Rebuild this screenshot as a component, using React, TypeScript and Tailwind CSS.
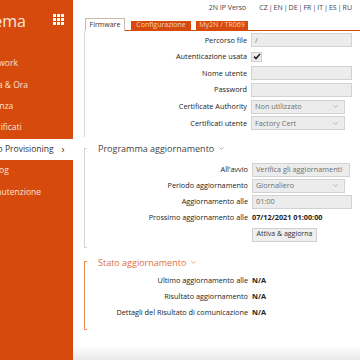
import { ChevronDown } from 'lucide-react';
import type { ReactNode } from 'react';

const ORANGE = 'bg-[#d64a0d]';

const NAV = ['Network', 'Data & Ora', 'Licenza', 'Certificati', 'Auto Provisioning', 'Syslog', 'Manutenzione'];

function GridIcon() {
  return (
    <svg width="11" height="11" viewBox="0 0 11 11" fill="#fff">
      {[0, 4, 8].map((y) =>
        [0, 4, 8].map((x) => <rect key={`${x}-${y}`} x={x} y={y} width="3" height="3" />),
      )}
    </svg>
  );
}

function Sidebar() {
  return (
    <aside className={`w-[73px] shrink-0 overflow-hidden ${ORANGE} text-white`}>
      <div className="flex h-[53px] items-start justify-between pt-[10px] pr-[9px]">
        <span className="ml-[-33px] whitespace-nowrap text-[16px] leading-[22px] text-[#fbe6da]">Sistema</span>
        <span className="mt-[4px]">
          <GridIcon />
        </span>
      </div>
      <nav>
        {NAV.map((item) => {
          const active = item === 'Auto Provisioning';
          return (
            <div
              key={item}
              className={`flex h-[21.4px] items-center whitespace-nowrap text-[8.5px] ${
                active ? 'bg-white text-[#333]' : 'text-[#fbe3d4]'
              }`}
            >
              <span className="ml-[-16px]">{item}</span>
              {active && <span className="ml-[8px] text-[10px] leading-none">›</span>}
            </div>
          );
        })}
      </nav>
    </aside>
  );
}

function Field({ w = 101, value = '', select = false }: { w?: number; value?: string; select?: boolean }) {
  return (
    <div
      className="flex h-[14px] items-center justify-between border border-[#d2d2d2] bg-[#ececec] pl-[3px] pr-[5px] text-[7.3px] text-[#6f6f6f]"
      style={{ width: w }}
    >
      <span className="whitespace-nowrap">{value}</span>
      {select && <ChevronDown size={7} strokeWidth={2} className="text-[#888]" />}
    </div>
  );
}

function Row({ label, labelW, children, h = 'h-[16.6px]' }: { label: string; labelW: number; children?: ReactNode; h?: string }) {
  return (
    <div className={`flex items-center ${h}`}>
      <div className="whitespace-nowrap text-right text-[7.3px] leading-none text-[#222]" style={{ width: labelW }}>
        {label}
      </div>
      <div className="ml-[4px] flex items-center leading-none">{children}</div>
    </div>
  );
}

function Value({ children }: { children: ReactNode }) {
  return <span className="text-[7.3px] font-bold leading-none text-[#222]">{children}</span>;
}

function Bracket({ color, top }: { color: string; top: string }) {
  return <div className={`w-[3px] shrink-0 border-y border-l ${color} ${top}`} />;
}

export default function App() {
  return (
    <div className="flex h-[360px] w-[360px] overflow-hidden bg-white font-['Open_Sans',sans-serif]">
      <Sidebar />
      <main className="flex min-w-0 flex-1 flex-col">
        <div className="flex h-[13px] items-end justify-end gap-[13px] pr-[8px] text-[7px] text-[#444]">
          <span>2N IP Verso</span>
          <span className="[word-spacing:-0.8px]">CZ | EN | DE | FR | IT | ES | RU</span>
        </div>

        {/* tabs */}
        <div className="mt-[5px] flex items-end pl-[12px]">
          <div className="flex h-[13px] w-[40px] items-center justify-center border-x border-t border-[#c9b8aa] text-[7px] text-[#333]">
            Firmware
          </div>
          <div className="flex flex-1 items-end gap-[5px] border-b-[1.5px] border-[#d64a0d] pl-[6px]">
            <div className={`flex h-[9.5px] w-[60px] items-center justify-center ${ORANGE} text-[7px] text-[#fad2be]`}>
              Configurazione
            </div>
            <div className={`flex h-[9.5px] w-[52px] items-center justify-center ${ORANGE} text-[7px] text-[#fad2be]`}>
              My2N / TR069
            </div>
          </div>
        </div>

        {/* firmware panel */}
        <div className="ml-[11px] border-l border-[#d8d8d8] pt-[1px] pb-[5px]">
          <Row label="Percorso file" labelW={162}>
            <Field value="/" />
          </Row>
          <Row label="Autenticazione usata" labelW={162}>
            <div className="flex h-[10px] w-[11px] items-center justify-center border border-[#cfcfcf] bg-[#ececec]">
              <svg width="8" height="7" viewBox="0 0 8 7">
                <path d="M1 3.6 L3 5.6 L7 1" fill="none" stroke="#222" strokeWidth="1.5" />
              </svg>
            </div>
          </Row>
          <Row label="Nome utente" labelW={162}>
            <Field />
          </Row>
          <Row label="Password" labelW={162}>
            <Field />
          </Row>
          <Row label="Certificate Authority" labelW={162}>
            <Field w={94} value="Non utilizzato" select />
          </Row>
          <Row label="Certificati utente" labelW={162}>
            <Field w={94} value="Factory Cert" select />
          </Row>
        </div>

        {/* programma aggiornamento */}
        <div className="mt-[6px] ml-[11px] flex">
          <Bracket color="border-[#d4d4d4]" top="mt-[5px]" />
          <div className="flex-1 pb-[6px]">
            <div className="flex h-[12px] items-center gap-[4px] pl-[11px] text-[9px] text-[#444]">
              Programma aggiornamento
              <ChevronDown size={7} strokeWidth={2} className="text-[#777]" />
            </div>
            <div className="h-[7px]" />
            <Row label="All'avvio" labelW={161} h="h-[16px]">
              <Field w={98} value="Verifica gli aggiornamenti" select />
            </Row>
            <Row label="Periodo aggiornamento" labelW={161} h="h-[16px]">
              <Field w={93} value="Giornaliero" select />
            </Row>
            <Row label="Aggiornamento alle" labelW={161} h="h-[16px]">
              <Field w={100} value="01:00" />
            </Row>
            <Row label="Prossimo aggiornamento alle" labelW={161} h="h-[16px]">
              <Value>07/12/2021 01:00:00</Value>
            </Row>
            <div className="mt-[2px] pl-[165px]">
              <button className="flex h-[14px] w-[65px] items-center justify-center border border-[#d0d0d0] bg-[#efefef] text-[7px] text-[#333]">
                Attiva &amp; aggiorna
              </button>
            </div>
          </div>
        </div>

        {/* stato aggiornamento */}
        <div className="mt-[9px] ml-[11px] flex">
          <Bracket color="border-[#e98a5a]" top="mt-[4px]" />
          <div className="flex-1 pb-[9px]">
            <div className="flex h-[12px] items-center gap-[4px] pl-[11px] text-[9px] text-[#e0703a]">
              Stato aggiornamento
              <ChevronDown size={7} strokeWidth={2} className="text-[#e0703a]" />
            </div>
            <div className="h-[4px]" />
            <Row label="Ultimo aggiornamento alle" labelW={161} h="h-[16px]">
              <Value>N/A</Value>
            </Row>
            <Row label="Risultato aggiornamento" labelW={161} h="h-[16px]">
              <Value>N/A</Value>
            </Row>
            <Row label="Dettagli del Risultato di comunicazione" labelW={161} h="h-[16px]">
              <Value>N/A</Value>
            </Row>
          </div>
        </div>

        <div className="mt-auto h-[14px] bg-gradient-to-b from-white to-[#e9e9e9]" />
      </main>
    </div>
  );
}
